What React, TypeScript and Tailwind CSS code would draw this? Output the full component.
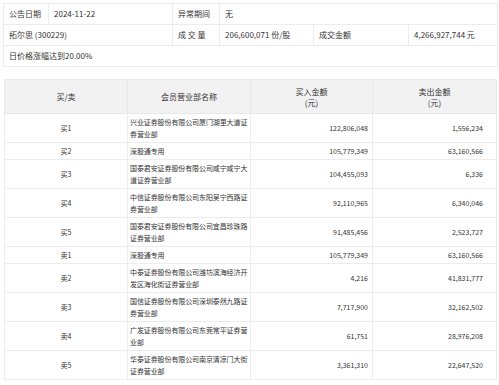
const rows = [
  { side: "买1", name: "兴业证券股份有限公司厦门湖里大道证券营业部", buy: "122,806,048", sell: "1,556,234" },
  { side: "买2", name: "深股通专用", buy: "105,779,349", sell: "63,160,566" },
  { side: "买3", name: "国泰君安证券股份有限公司咸宁咸宁大道证券营业部", buy: "104,455,093", sell: "6,336" },
  { side: "买4", name: "中信证券股份有限公司东阳吴宁西路证券营业部", buy: "92,110,965", sell: "6,340,046" },
  { side: "买5", name: "国泰君安证券股份有限公司宜昌珍珠路证券营业部", buy: "91,485,456", sell: "2,523,727" },
  { side: "卖1", name: "深股通专用", buy: "105,779,349", sell: "63,160,566" },
  { side: "卖2", name: "中泰证券股份有限公司潍坊滨海经济开发区海化街证券营业部", buy: "4,216", sell: "41,831,777" },
  { side: "卖3", name: "国信证券股份有限公司深圳泰然九路证券营业部", buy: "7,717,900", sell: "32,162,502" },
  { side: "卖4", name: "广发证券股份有限公司东莞常平证券营业部", buy: "61,751", sell: "28,976,208" },
  { side: "卖5", name: "华泰证券股份有限公司南京清凉门大街证券营业部", buy: "3,361,310", sell: "22,647,520" },
];

export default function App() {
  return (
    <main
      className="w-[499px] h-[385px] bg-white text-[#333] overflow-hidden"
      style={{ fontFamily: '"Noto Sans CJK SC", "Noto Sans", sans-serif' }}
    >
      {/* 上部：公告情報 */}
      <div className="pt-[3px] pl-[3px] pr-[2px]">
        <table className="w-[494px] border-collapse table-fixed text-[8px] leading-[10px]">
          <colgroup>
            <col className="w-[45px]" />
            <col className="w-[124px]" />
            <col className="w-[47px]" />
            <col className="w-[94px]" />
            <col className="w-[95px]" />
            <col className="w-[89px]" />
          </colgroup>
          <tbody>
            <tr className="h-[21px]">
              <Cell>公告日期</Cell>
              <Cell>2024-11-22</Cell>
              <Cell>异常期间</Cell>
              <Cell span={3}>无</Cell>
            </tr>
            <tr className="h-[21px]">
              <Cell span={2}>拓尔思 (300229)</Cell>
              <Cell>成 交 量</Cell>
              <Cell>206,600,071 份/股</Cell>
              <Cell>成交金额</Cell>
              <Cell>4,266,927,744 元</Cell>
            </tr>
            <tr className="h-[21px]">
              <Cell span={6}>日价格涨幅达到20.00%</Cell>
            </tr>
          </tbody>
        </table>
      </div>

      {/* 下部：買い/売り 明細 */}
      <div className="pt-[12px] pl-[4px] pr-[3px]">
        <table className="w-[492px] border-collapse table-fixed">
          <colgroup>
            <col className="w-[123px]" />
            <col className="w-[123px]" />
            <col className="w-[122px]" />
            <col className="w-[124px]" />
          </colgroup>
          <thead>
            <tr className="h-[34px] bg-[#f2f2f2] text-[8px] leading-[11px]">
              <th className="font-normal border border-[#e8e8e8]">买/卖</th>
              <th className="font-normal border border-[#e8e8e8]">会员营业部名称</th>
              <th className="font-normal border border-[#e8e8e8]">
                买入金额
                <br />
                (元)
              </th>
              <th className="font-normal border border-[#e8e8e8]">
                卖出金额
                <br />
                (元)
              </th>
            </tr>
          </thead>
          <tbody className="text-[7px] leading-[12px]">
            {rows.map((r) => (
              <tr key={r.side}>
                <td className="text-center border border-[#ececec] py-[2px]">{r.side}</td>
                <td className="border border-[#ececec] py-[2px] pl-[2px] pr-0 tracking-[-0.1px]">{r.name}</td>
                <td className="text-right border border-[#ececec] py-[2px] pr-[4px]">{r.buy}</td>
                <td className="text-right border border-[#ececec] py-[2px] pr-[13px]">{r.sell}</td>
              </tr>
            ))}
          </tbody>
        </table>
      </div>
    </main>
  );
}

function Cell({ children, span }: { children: React.ReactNode; span?: number }) {
  return (
    <td colSpan={span} className="border border-[#ececec] px-[5px] whitespace-nowrap">
      {children}
    </td>
  );
}
